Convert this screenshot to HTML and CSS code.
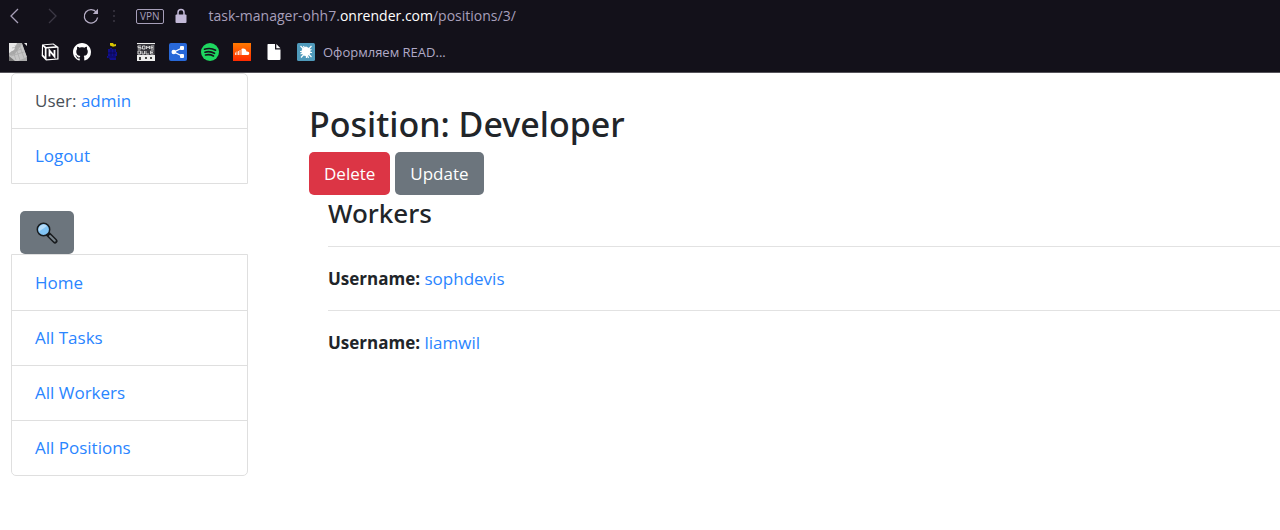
FILE: index.html
```html
<!DOCTYPE html>
<html lang="en">
<head>
<meta charset="utf-8">
<title>Position: Developer</title>
<link rel="stylesheet" href="styles.css">
</head>
<body>
<header class="browser">
  <div class="toolbar">
    <button class="nav-btn" aria-label="Back"><svg width="18" height="18" viewBox="0 0 18 18"><path d="M13 2 6 9l7 7" fill="none" stroke="#a8a0b8" stroke-width="1.3"/></svg></button>
    <button class="nav-btn" aria-label="Forward"><svg width="18" height="18" viewBox="0 0 18 18"><path d="m6 2 7 7-7 7" fill="none" stroke="#3b3844" stroke-width="1.3"/></svg></button>
    <button class="nav-btn" aria-label="Reload"><svg width="18" height="18" viewBox="0 0 18 18"><path d="M15.500 5.500A6.700 6.700 0 1 0 16.600 10.500" fill="none" stroke="#b5adc5" stroke-width="1.300"/><path d="M17 1.800v5.200h-5.200z" fill="#b5adc5"/></svg></button>
    <svg class="dots" width="4" height="14" viewBox="0 0 4 14" fill="#302d38"><rect x="1" y="1" width="2" height="2"/><rect x="1" y="6" width="2" height="2"/><rect x="1" y="11" width="2" height="2"/></svg>
    <span class="vpn">VPN</span>
    <svg class="lock" width="12" height="16" viewBox="0 0 12 16"><path d="M3 7V4.500a3 3 0 0 1 6 0V7" fill="none" stroke="#c3b9d8" stroke-width="1.500"/><rect x="0.500" y="6.500" width="11" height="8.500" rx="1" fill="#c3b9d8"/></svg>
    <span class="url">task-manager-ohh7.<b>onrender.com</b>/positions/3/</span>
  </div>
  <nav class="bookmarks" aria-label="Bookmarks">
    <svg width="18" height="18" viewBox="0 0 18 18"><path d="M0 0h13l5 15v3H0z" fill="#aaa"/><path d="M0 0h8L5 7l-5 3zM15 0h3v3z" fill="#e8e8e8"/><path d="M13 1l5 13-9 4H3l-3-5 6-2z" fill="#c6c6c6"/><path d="M3 5l9-2M2 9l11-3M2 13l13-4M6 2l5 15M10 1l5 14M4 8l3 9" stroke="#a2a2a2" stroke-width=".6"/><path d="M0 13l6 5H0z" fill="#777"/></svg>
    <svg width="18" height="18" viewBox="0 0 18 18"><path d="M1 1.500 12.500 0.500 17.500 4v12.500L5 17.500.7 13z" fill="#fff"/><path d="M3 2.300 12 1.600 14.500 3.300 5.200 3.900z" fill="#15121b"/><path d="M2 3.500 3.800 5.300v8.500L2 11.700z" fill="#15121b"/><path d="M5.500 5.500 16.300 4.800v10.800L5.500 16.300z" fill="#15121b"/><path d="M8.500 13.500V7.500l5 6V7" fill="none" stroke="#fff" stroke-width="1.800"/></svg>
    <svg width="18" height="18" viewBox="0 0 16 16" fill="#fff"><path d="M8 0C3.580 0 0 3.580 0 8c0 3.540 2.290 6.530 5.470 7.590.4.070.55-.17.55-.38 0-.19-.01-.82-.01-1.490-2.010.37-2.530-.49-2.690-.94-.09-.23-.48-.94-.82-1.130-.28-.15-.68-.52-.01-.53.63-.01 1.080.58 1.230.82.720 1.210 1.870.87 2.330.66.070-.52.280-.87.510-1.070-1.780-.2-3.640-.89-3.640-3.950 0-.87.310-1.590.820-2.150-.08-.2-.36-1.020.080-2.120 0 0 .67-.21 2.200.82.640-.18 1.320-.27 2-.27s1.360.09 2 .27c1.530-1.040 2.200-.82 2.200-.82.440 1.100.160 1.920.080 2.120.510.56.820 1.270.820 2.150 0 3.070-1.870 3.750-3.650 3.950.290.250.540.730.540 1.480 0 1.070-.01 1.930-.01 2.200 0 .21.150.46.550.38A8.010 8.010 0 0 0 16 8c0-4.420-3.580-8-8-8z"/></svg>
    <svg width="18" height="18" viewBox="0 0 18 18"><path d="M5 0h3l1 1.500 2-.5v2l-3 .7L5 2.500z" fill="#d8c500"/><path d="M3 6h2V5h2v1h4v3h1v4h-1v4H5l-1-2H2v-2h1z" fill="#12108c"/><path d="M3 10h8M6 6v7M9 6v7M3 14h8" stroke="#08073c" stroke-width=".7"/></svg>
    <svg width="18" height="18" viewBox="0 0 18 18"><path fill="#eee" d="M0 0h18v1H0zM0 12h18v6H0z"/><path d="M0 1h18v11H0z" fill="#37363c"/><path d="M4 3H1v1.500h3V6H1M5.500 3H8v3H5.500zM9.500 6V3l1.500 2 1.500-2v3M17 3h-3v3h3M14 4.500h2.500M1 8v3h2.500V8zM5 8v3h2.500V8M9 8v3h3M16.500 8H13.500v3h3M13.500 9.500H16" fill="none" stroke="#ddd" stroke-width=".9"/><path d="M2 14h2v3H2zM8 14h2v2H8zM13 14h2v2h-2z" fill="#444"/></svg>
    <svg width="18" height="18" viewBox="0 0 18 18"><rect width="18" height="18" rx="2" fill="#2868d8"/><path d="M13 5 5 9l8 4" fill="none" stroke="#fff" stroke-width="1.300"/><circle cx="4.800" cy="9" r="2.300" fill="#fff"/><rect x="11" y="3" width="4" height="4" rx="1" fill="#fff"/><rect x="11" y="11" width="4" height="4" rx="1" fill="#fff"/></svg>
    <svg width="18" height="18" viewBox="0 0 18 18"><circle cx="9" cy="9" r="9" fill="#1ed760"/><path d="M3.500 6.200C7 5.200 11.500 5.500 14.600 7.200M4 9.200c3-.9 6.700-.5 9.500 1.100M4.500 12c2.600-.7 5.500-.4 8 1" fill="none" stroke="#15121b" stroke-width="1.600" stroke-linecap="round"/></svg>
    <svg width="18" height="18" viewBox="0 0 18 18"><defs><linearGradient id="sc" x2="0" y2="1"><stop stop-color="#ff7a00"/><stop offset="1" stop-color="#ff2a00"/></linearGradient></defs><rect width="18" height="18" fill="url(#sc)"/><path d="M8.500 12V6c2.500-1.300 4.600.2 5 2.500C17 8 17 12 14.500 12z" fill="#fff"/><path d="M2.500 9.500V12M4 8.500V12M5.500 8V12M7 7V12" stroke="#ffd8c8"/></svg>
    <svg width="18" height="18" viewBox="0 0 18 18"><path d="M3 1h7v5.500h5.500V16q0 1-1 1H3.500q-1 0-1-1V1.500z" fill="#fff"/><path d="m11.300 1 4.200 4.300h-4.200z" fill="#fff"/></svg>
    <a class="bookmark" href="#"><svg width="18" height="18" viewBox="0 0 18 18"><rect width="18" height="18" rx="1.500" fill="#4f9abb"/><circle cx="9" cy="8.500" r="4.500" fill="#fff"/><path d="M3.500 3l11 11M14.500 3 4 14.500M9 3.500 9.500 15M3 8.500l12 1M6.500 3l5 12M14.500 6.500 3.500 11" stroke="#fff" stroke-width="1.200"/></svg><span>Оформляем READ...</span></a>
  </nav>
</header>
<div class="page">
  <aside class="sidebar">
    <ul class="list list-top">
      <li>User: <a href="#">admin</a></li>
      <li><a href="#">Logout</a></li>
    </ul>
    <button class="btn search" aria-label="Search"><svg width="22" height="22" viewBox="0 0 22 22"><path d="m12.500 12.500 6.500 6.500" stroke="#181b1e" stroke-width="5" stroke-linecap="round"/><path d="m14 14 4.800 4.800" stroke="#78838b" stroke-width="2" stroke-linecap="round"/><circle cx="7.500" cy="7.500" r="6.200" fill="#82c4f4" stroke="#181b1e" stroke-width="1.500"/><path d="M3 9.500A5 5 0 0 1 11 4z" fill="#b6dcf8"/></svg></button>
    <ul class="list list-bottom">
      <li><a href="#">Home</a></li>
      <li><a href="#">All Tasks</a></li>
      <li><a href="#">All Workers</a></li>
      <li><a href="#">All Positions</a></li>
    </ul>
  </aside>
  <main class="content">
    <h1>Position: Developer</h1>
    <div class="actions">
      <button class="btn danger">Delete</button>
      <button class="btn">Update</button>
    </div>
    <section class="workers">
      <h2>Workers</h2>
      <p><strong>Username:</strong> <a href="#">sophdevis</a></p>
      <p><strong>Username:</strong> <a href="#">liamwil</a></p>
    </section>
  </main>
</div>
</body>
</html>
```
FILE: styles.css
```css
* { box-sizing: border-box; }
body {
  margin: 0;
  background: #fff;
  color: #212529;
  font: 17px/28px "Open Sans", "Noto Sans", sans-serif;
}
a { color: #2a85ff; text-decoration: none; }
button { font: inherit; border: 0; cursor: pointer; }
svg { display: block; flex: none; }

.browser {
  background: #13111a;
  border-bottom: 1px solid #55535a;
  color: #a79fba;
  font-size: 14px;
}
.toolbar { display: flex; align-items: center; height: 32px; padding-left: 5px; }
.nav-btn { background: none; padding: 0; margin-right: 20px; }
.nav-btn + .nav-btn + .nav-btn { margin-right: 13px; }
.vpn {
  border: 1px solid #a79fba;
  border-radius: 2px;
  margin-left: 20px;
  padding: 0 3px;
  font-size: 10px;
  line-height: 13px;
}
.lock { margin-left: 11px; }
.url { margin-left: 22px; }
.url b { color: #fff; font-weight: 400; }
.bookmarks {
  display: flex;
  align-items: center;
  gap: 14px;
  height: 40px;
  padding-left: 9px;
}
.bookmark { display: flex; align-items: center; gap: 8px; color: #b0a9c6; font-size: 13px; }

.page { display: flex; gap: 61px; padding-left: 11px; }
.sidebar { flex: 0 0 237px; }
.list { list-style: none; margin: 0; padding: 0; border: 1px solid #dfdfdf; color: #495057; }
.list li { padding: 13px 23px; }
.list li + li { border-top: 1px solid #dfdfdf; }
.list-top { border-radius: 5px 5px 0 0; margin-bottom: 27px; }
.list-bottom { border-radius: 0 0 5px 5px; padding-top: 1px; }
.btn {
  background: #6c757d;
  color: #fff;
  border-radius: 5px;
  padding: 8px 15px 7px;
}
.danger { background: #dc3545; }
.search { display: block; margin-left: 9px; padding: 11px 16px 10px; }

.content { flex: 1; min-width: 0; padding-top: 28px; }
h1, h2 { margin: 0; font-family: "Noto Sans", "Open Sans", sans-serif; font-weight: 500; }
h1 { font-size: 34px; line-height: 46px; margin-bottom: 5px; }
.actions { display: flex; gap: 5px; }
.workers { padding-left: 19px; }
h2 { font-size: 26px; line-height: 36px; margin-bottom: 15px; }
.workers p { margin: 0; padding: 18px 0 17px; border-top: 1px solid #e2e2e2; }
```
